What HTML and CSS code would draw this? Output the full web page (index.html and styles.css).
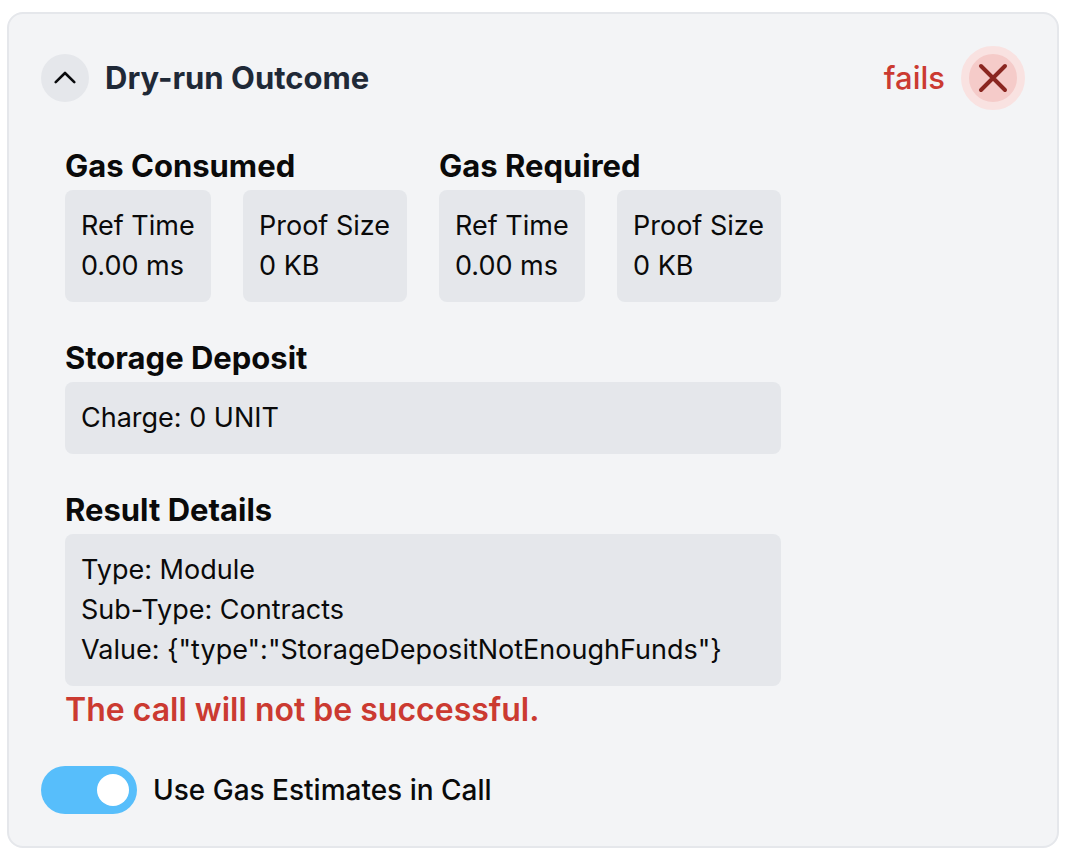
FILE: index.html
```html
<!DOCTYPE html>
<html lang="en">
<head>
<meta charset="utf-8">
<title>Dry-run Outcome</title>
<link rel="stylesheet" href="styles.css">
</head>
<body>
<main class="card">
  <header class="card-header">
    <button class="collapse" type="button" aria-label="Collapse" aria-expanded="true">
      <svg viewBox="0 0 24 24" width="24" height="24" aria-hidden="true"><path d="M2.7 16.2L12 7l9.3 9.2" stroke-width="2.6"/></svg>
    </button>
    <h1 class="title">Dry-run Outcome</h1>
    <span class="status">fails</span>
    <span class="status-icon">
      <svg viewBox="0 0 32 32" width="32" height="32" aria-hidden="true"><path d="M4 4l24 24M28 4L4 28" stroke-width="4"/></svg>
    </span>
  </header>
  <div class="details">
    <div class="gas">
      <section>
        <h2 class="heading">Gas Consumed</h2>
        <div class="metrics">
          <div class="box time">Ref Time<br>0.00 ms</div>
          <div class="box size">Proof Size<br>0 KB</div>
        </div>
      </section>
      <section>
        <h2 class="heading">Gas Required</h2>
        <div class="metrics">
          <div class="box time">Ref Time<br>0.00 ms</div>
          <div class="box size">Proof Size<br>0 KB</div>
        </div>
      </section>
    </div>
    <section class="block">
      <h2 class="heading">Storage Deposit</h2>
      <div class="box">Charge: 0 UNIT</div>
    </section>
    <section class="block">
      <h2 class="heading">Result Details</h2>
      <div class="box">Type: Module<br>Sub-Type: Contracts<br>Value: {"type":"StorageDepositNotEnoughFunds"}</div>
      <p class="failure">The call will not be successful.</p>
    </section>
  </div>
  <label class="toggle" for="estimates">
    <input class="switch" id="estimates" type="checkbox" role="switch" checked>
    Use Gas Estimates in Call
  </label>
</main>
</body>
</html>
```

FILE: styles.css
```css
* { box-sizing: border-box; }
body {
  margin: 0;
  padding: 12px 23px 14px 7px;
  background: #fff;
  color: #0a0a0a;
  font: 27px/40px Inter, sans-serif;
}
.card {
  padding: 32px;
  border: 2px solid #e5e7eb;
  border-radius: 16px;
  background: #f3f4f6;
}
.card-header { display: flex; align-items: center; gap: 16px; }
.collapse {
  display: grid;
  place-items: center;
  width: 48px;
  height: 48px;
  padding: 0;
  border: 0;
  border-radius: 50%;
  background: #e5e7eb;
  color: #090a0c;
}
svg { fill: none; stroke: currentColor; stroke-linecap: round; stroke-linejoin: round; }
.title { flex: 1; margin: 0; color: #1f2937; font-size: 31px; font-weight: 700; }
.status { color: #cb3a31; font-size: 31px; font-weight: 500; }
.status-icon {
  display: grid;
  place-items: center;
  width: 64px;
  height: 64px;
  border: 8px solid #f9e2e1;
  border-radius: 50%;
  background: #f5cbc9;
  color: #8a2620;
}
.details { width: fit-content; padding: 32px 24px 0; }
.gas { display: flex; gap: 32px; }
.metrics { display: flex; gap: 32px; }
.heading { margin: 0; font-size: 31px; line-height: 48px; font-weight: 700; }
.box { padding: 16px; border-radius: 8px; background: #e5e7eb; }
.time { min-width: 146px; }
.size { min-width: 164px; }
.block { margin-top: 32px; }
.failure { margin: 0; color: #cb3a31; font-size: 32px; line-height: 48px; font-weight: 600; }
.toggle { display: flex; align-items: center; gap: 16px; margin-top: 32px; font-size: 28px; font-weight: 500; }
.switch {
  appearance: none;
  display: flex;
  justify-content: flex-end;
  width: 96px;
  height: 48px;
  margin: 0;
  padding: 8px;
  border-radius: 24px;
  background: #57befb;
}
.switch::before {
  content: "";
  width: 32px;
  height: 32px;
  border-radius: 50%;
  background: #fff;
}
.switch:not(:checked) { justify-content: flex-start; background: #d1d5db; }
```
